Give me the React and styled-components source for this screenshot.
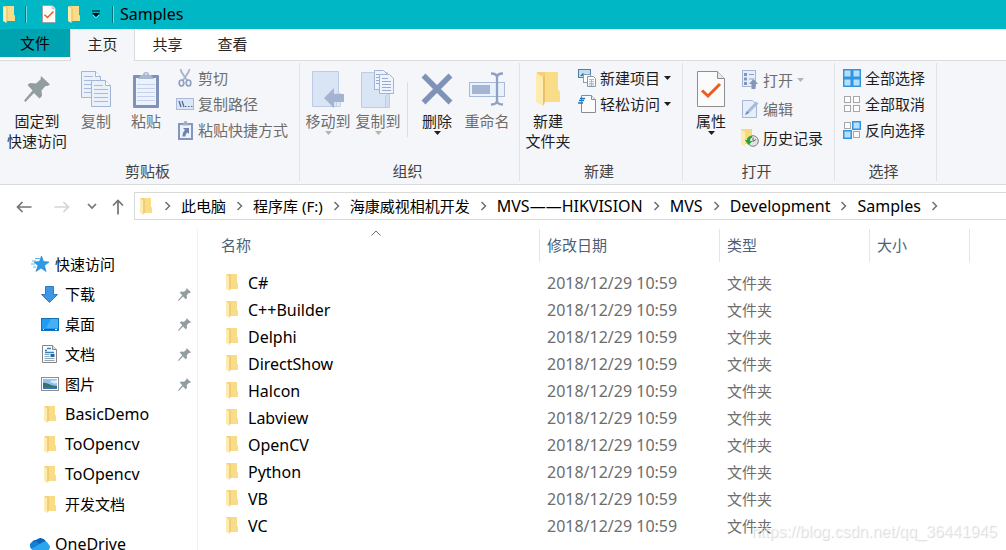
import styled, { createGlobalStyle, css } from "styled-components"

const GlobalStyle = createGlobalStyle`
  * {
    box-sizing: border-box;
  }
  body {
    margin: 0;
    background: #fff;
    color: #000;
    font-family: "Noto Sans", "Noto Sans CJK SC", sans-serif;
    font-size: 15px;
    line-height: 20px;
  }
  button {
    border: 0;
    padding: 0;
    background: none;
    color: inherit;
    font: inherit;
  }
  a {
    color: inherit;
    text-decoration: none;
  }
  svg {
    display: block;
    flex: none;
  }
`

const Window = styled.div`
  display: flex;
  flex-direction: column;
  height: 100vh;
  overflow: hidden;
  position: relative;
`

const TitleBar = styled.header`
  display: flex;
  align-items: center;
  gap: 10px;
  height: 29px;
  padding: 0 0 1px 3px;
  background: #00b7c6;
`

const TitleDivider = styled.span`
  width: 2px;
  height: 17px;
  border-left: 1px solid #027680;
  border-right: 1px solid #6fd9e2;
`

const QuickButton = styled.button`
  display: flex;
  align-items: center;
  justify-content: center;
`

const QuickTools = styled.div`
  display: flex;
  align-items: center;
  gap: 12px;
  padding: 0 2px 0 5px;
`

const Titulo = styled.h1`
  margin: 0 0 0 -4px;
  font-size: 16px;
  font-weight: 400;
`

const TabBar = styled.nav`
  display: flex;
  height: 32px;
  box-shadow: inset 0 -1px #dadbdc;
`

const Tab = styled.button`
  width: 65px;
  padding-bottom: 2px;
  color: #262626;
  ${({ $file }) => $file && css`
    width: 70px;
    height: 28px;
    padding: 0;
    background: #00a4b0;
    color: #000;
  `}
  ${({ $active }) => $active && css`
    border: 1px solid #dadbdc;
    border-top: 0;
    border-bottom: 0;
    background: #f5f6f9;
  `}
`

const Ribbon = styled.div`
  display: flex;
  flex: none;
  padding: 2px 0 3px;
  border-bottom: 1px solid #dadbdc;
  background: #f5f6f9;
`

const Group = styled.section`
  display: flex;
  flex-direction: column;
  flex: none;
  padding: 0 7px 0 3px;
  border-right: 1px solid #e1e2e4;
`

const GroupBody = styled.div`
  display: flex;
  height: 98px;
`

const GroupLabel = styled.h2`
  margin: 0;
  color: #444;
  font-size: 15px;
  font-weight: 400;
  text-align: center;
`

const LargeButton = styled.button`
  display: flex;
  flex-direction: column;
  align-items: center;
  width: ${({ $wide }) => ($wide ? "68px" : "50px")};
  padding-top: 4px;
  color: #1e1e1e;
  white-space: nowrap;
  &:disabled {
    color: #6d6d6d;
  }
`

const LargeIcon = styled.span`
  display: flex;
  align-items: center;
  justify-content: center;
  height: 44px;
`

const GroupDivider = styled.span`
  width: 1px;
  margin: 19px 4px 24px;
  background: #dcdde0;
`

const SmallColumn = styled.div`
  display: grid;
  grid-auto-rows: ${({ $loose }) => ($loose ? "29px" : "26px")};
  align-content: start;
  margin-left: 5px;
  padding: 2px 4px 0 0;
`

const SmallButton = styled.button`
  display: flex;
  align-items: center;
  gap: 4px;
  color: #1e1e1e;
  white-space: nowrap;
  &:disabled {
    color: #6d6d6d;
  }
`

const SmallIcon = styled.span`
  display: flex;
  align-items: center;
  justify-content: center;
  width: 18px;
`

const NavRow = styled.div`
  display: flex;
  align-items: flex-start;
  flex: none;
  padding: 7px 0 8px 16px;
`

const NavButtons = styled.div`
  display: flex;
  align-items: center;
  height: 29px;
`

const NavButton = styled.button`
  margin-right: ${({ $gap }) => $gap}px;
`

const AddressBar = styled.nav`
  display: flex;
  align-items: center;
  flex: 1;
  gap: 10px;
  height: 28px;
  padding-left: 5px;
  border: 1px solid #d9d9d9;
  border-right: 0;
  white-space: nowrap;
`

const AddressIcon = styled.span`
  padding-right: 2px;
`

const Crumb = styled.a`
  font-size: ${({ $latin }) => ($latin ? "16px" : "15px")};
`

const Content = styled.div`
  display: flex;
  flex: 1;
  min-height: 0;
`

const Sidebar = styled.aside`
  flex: none;
  width: 198px;
  padding-top: 20px;
  border-right: 1px solid #f2f2f2;
`

const SideItem = styled.a`
  display: flex;
  align-items: center;
  gap: 6px;
  height: 30px;
  margin-top: ${({ $spaced }) => ($spaced ? "10px" : "0")};
  padding: 0 6px 0 ${({ $root }) => ($root ? "30px" : "40px")};
  font-size: ${({ $latin }) => ($latin ? "16px" : "15px")};
`

const SideIcon = styled.span`
  display: flex;
  justify-content: center;
  width: 19px;
`

const SideLabel = styled.span`
  flex: 1;
`

const FilePane = styled.main`
  flex: 1;
  padding-left: 14px;
  overflow: hidden;
`

const FileTable = styled.table`
  border-collapse: collapse;
  table-layout: fixed;
  width: 758px;
`

const HeadCell = styled.th`
  width: ${({ $width }) => $width}px;
  height: 40px;
  padding: 0;
  color: #4c607a;
  font-weight: 400;
  text-align: left;
  vertical-align: top;
`

const HeadLabel = styled.div`
  position: relative;
  height: 33px;
  padding: 6px 0 0 ${({ $first }) => ($first ? "9px" : "7px")};
  border-right: 1px solid #e5e5e5;
`

const SortMark = styled.span`
  position: absolute;
  top: 1px;
  left: 50%;
  margin-left: -5px;
`

const Cell = styled.td`
  height: 27px;
  padding: 0 0 0 7px;
  color: #6d6d6d;
  font-size: ${({ $latin }) => ($latin ? "16px" : "15px")};
`

const FileName = styled.a`
  display: flex;
  align-items: center;
  gap: 10px;
  padding-left: 7px;
  color: #000;
`

const Watermark = styled.span`
  position: absolute;
  right: 9px;
  bottom: 8px;
  color: rgba(255, 255, 255, 0.6);
  font-family: "Liberation Sans", sans-serif;
  font-size: 16px;
  text-shadow: 1px 1px 1px rgba(0, 0, 0, 0.16);
`

const Folder = ({ large }) => (
  <svg width={large ? 24 : 12} height={large ? 34 : 17} viewBox="0 0 24 34">
    <path d="M1 0h21v18l2 2v10H5z" fill="#f4d077" />
    <path d="M9 0h13v18l2 2v10H9z" fill="#f9dc88" />
    <path d="M0 1l7 4v29l-7-4z" fill="#fdebb0" />
    <path d="M7 5v29l2-4V4z" fill="#e9c168" />
  </svg>
)

const Pin = ({ size }) => (
  <svg width={size} height={size} viewBox="0 0 26 26">
    <path
      d="M17 0l9 8.500-2.500 1.500h-2l-4 4.500.5 5.500-2.500 2.500-5.500-5.500L1.500 26 0 24.500l8.500-10L3.500 9 6 7l6 .5 4.500-4z"
      fill="#929da2"
    />
  </svg>
)

const Caret = ({ muted }) => (
  <svg width="7" height="4" viewBox="0 0 7 4">
    <path d="M0 0h7L3.500 4z" fill={muted ? "#b4b4b4" : "#1e1e1e"} />
  </svg>
)

const Chevron = () => (
  <svg width="7" height="10" viewBox="0 0 7 10">
    <path d="M1.500 1l4 4-4 4" fill="none" stroke="#6f6f6f" strokeWidth="1.500" />
  </svg>
)

const CheckedPage = ({ large }) => (
  <svg width={large ? 28 : 14} height={large ? 36 : 18} viewBox="0 0 28 36">
    <path d="M.5.500h20l7 7v28H.5z" fill="#fbfbfc" stroke="#8e8e90" strokeWidth={large ? 1 : 2} />
    <path d="M20.500.500v7h7" fill="#e8e8ea" stroke="#8e8e90" />
    <path d="M5 19.500l6 5.500L23 13" fill="none" stroke="#f05a1a" strokeWidth="3" />
  </svg>
)

const PageShape = ({ x, y }) => (
  <g transform={`translate(${x} ${y})`}>
    <path d="M.5.500h14l5 5v21H.5z" fill="#eaf1fb" stroke="#a3b4d4" />
    <path d="M14.500.500v5h5" fill="#fff" stroke="#a3b4d4" />
    <path d="M3 5.500h9M3 9.500h14M3 13.500h14M3 17.500h14M3 21.500h14" stroke="#a8b9da" />
  </g>
)

const CopyIcon = () => (
  <svg width="30" height="36" viewBox="0 0 30 36">
    <PageShape x={0} y={0} />
    <PageShape x={10} y={9} />
  </svg>
)

const PasteIcon = () => (
  <svg width="26" height="37" viewBox="0 0 26 37">
    <rect y="4" width="26" height="33" rx="1" fill="#8092b8" />
    <rect x="3" y="7" width="20" height="27" fill="#edf3fc" />
    <path d="M4 13.500h18M4 17.500h18M4 21.500h18M4 25.500h18M4 29.500h18" stroke="#c3d2ea" />
    <path d="M5 8l3-4h2a3 3 0 0 1 6 0h2l3 4z" fill="#a9b7d0" />
    <circle cx="13" cy="3" r="1" fill="#e5ebf5" />
  </svg>
)

const CutIcon = () => (
  <svg width="14" height="18" viewBox="0 0 14 18" fill="none" stroke="#8fa0c0">
    <path d="M2.500 0l1 3 6 9M11.500 0l-1 3-6 9" strokeWidth="1.800" stroke="#a6b4cd" />
    <ellipse cx="3.500" cy="14" rx="2.300" ry="3" strokeWidth="1.700" />
    <ellipse cx="10.500" cy="14" rx="2.300" ry="3" strokeWidth="1.700" />
  </svg>
)

const PathIcon = () => (
  <svg width="18" height="12" viewBox="0 0 18 12">
    <rect x=".5" y=".5" width="17" height="11" fill="#dbe6f6" stroke="#a9badb" />
    <path d="M3 3l2 6M6 3l2 6" stroke="#52688f" strokeWidth="1.300" />
    <path d="M9 8.500h1.500M12 8.500h1.500M15 8.500h1.500" stroke="#52688f" />
  </svg>
)

const PasteLinkIcon = () => (
  <svg width="15" height="19" viewBox="0 0 15 19">
    <rect x="1" y="3" width="13" height="15" fill="#edf3fc" stroke="#8496bc" strokeWidth="2" />
    <path d="M4 4.500L5.500 2a2 2 0 0 1 4 0L11 4.500z" fill="#a0afcb" />
    <path d="M5 7h6v6L9.500 11.500C8 12.500 7.500 13.500 7.500 15.500H4.500c0-2.500.5-4.500 2.500-6.500z" fill="#6f83ad" />
  </svg>
)

const MoveIcon = () => (
  <svg width="32" height="37" viewBox="0 0 32 37">
    <path d="M.5.500h26v35H.5z" fill="#d9e5f5" stroke="#bccce5" />
    <path d="M24.500 22.500h4v13h-4z" fill="#dfe9f7" stroke="#c5d3e9" />
    <path d="M12 27l10-10v6h10v8H22v6z" fill="#a4b3d0" />
  </svg>
)

const CopyToIcon = () => (
  <svg width="34" height="38" viewBox="0 0 34 38">
    <path d="M.5 2.500h26v35H.5z" fill="#d9e5f5" stroke="#bccce5" />
    <path d="M24.500 37.500v-11l2-2h2v13z" fill="#d0deef" stroke="#bccce5" />
    <g fill="#eef4fd" stroke="#a3b4d4">
      <path d="M13.500.500h9l4 4v15h-13z" />
      <path d="M18.500 4.500h10l4 4v15h-14z" />
    </g>
    <path d="M15 4.500h3M15 7.500h3M15 10.500h3M15 13.500h3M21 8.500h6M21 11.500h9M21 14.500h9M21 17.500h9M21 20.500h9" stroke="#98abcf" />
  </svg>
)

const DeleteIcon = () => (
  <svg width="32" height="32" viewBox="0 0 32 32">
    <path d="M2.500 2.500l27 27M29.500 2.500l-27 27" stroke="#7f92b7" strokeWidth="5.500" />
  </svg>
)

const RenameIcon = () => (
  <svg width="36" height="34" viewBox="0 0 36 34">
    <rect x=".5" y="10.500" width="35" height="14" fill="#e9f1fc" stroke="#a9bad8" />
    <rect x="3" y="13" width="18" height="9" fill="#a5b4d1" />
    <path d="M22 1.500c4 0 6 1 6 4v23c0 3-2 4-6 4M34 1.500c-4 0-6 1-6 4v23c0 3 2 4 6 4" fill="none" stroke="#8fa1c3" strokeWidth="2.300" />
  </svg>
)

const NewItemIcon = () => (
  <svg width="18" height="18" viewBox="0 0 18 18">
    <rect x=".5" y=".5" width="12" height="8" fill="#bfe0f3" stroke="#4e7f9f" />
    <path d="M2 7l3-3 3 3z" fill="#357d8f" />
    <rect x="5.500" y="5.500" width="7" height="8" fill="#fff" stroke="#899fb1" />
    <path d="M9.500 7.500h6l2 2v8h-8z" fill="#fff" stroke="#8796a8" />
    <path d="M11 10.500h5M11 12.500h5M11 14.500h5M11 16h5" stroke="#9bbfe4" />
    <path d="M13.500 10v7" stroke="#d9a6a6" />
  </svg>
)

const EasyAccessIcon = () => (
  <svg width="18" height="18" viewBox="0 0 18 18">
    <path d="M3.500.500h10l4 4v13h-14z" fill="#fbfbfc" stroke="#8a8c90" />
    <path d="M13.500.500v4h4" fill="#eee" stroke="#8a8c90" />
    <path d="M2 3.500h5M1 5.500h5M0 8h5" stroke="#2079c4" strokeWidth="1.400" />
  </svg>
)

const OpenIcon = () => (
  <svg width="16" height="19" viewBox="0 0 16 19">
    <rect x=".5" y=".5" width="13" height="16" fill="#e6eefa" stroke="#a5b6d5" />
    <path d="M2 3h3v3H2zM2 7.500h3v3H2zM2 12h3v3H2z" fill="#8296bd" />
    <path d="M7 4.500h5M7 9h5" stroke="#8ea1c5" />
    <path d="M11.500 9l4.500 5h-2.500v5h-4v-5H7z" fill="#8295bb" />
  </svg>
)

const EditIcon = () => (
  <svg width="17" height="18" viewBox="0 0 17 18">
    <path d="M.5.500h10l4 4v13H.5z" fill="#e6eefa" stroke="#a5b6d5" />
    <path d="M3 15l2-4L14 1.500l2.500 2L7 13z" fill="#a9bad8" />
    <path d="M3 15l2-4 2 2z" fill="#7287b1" />
  </svg>
)

const HistoryIcon = () => (
  <svg width="18" height="18" viewBox="0 0 18 18">
    <path d="M0 0h11v15H0z" fill="#f8d983" />
    <path d="M0 1l4 2v15l-4-3z" fill="#fdebb0" />
    <circle cx="12" cy="12" r="5.300" fill="#e3e3e3" stroke="#7c7f80" />
    <path d="M12 8.500v4l3-2" fill="none" stroke="#65696b" />
    <path d="M11 7C7 7 6 9.500 6 11H4l3.500 5 4-4H9c0-2 .5-3 2-3.500z" fill="#23a43a" />
  </svg>
)

// each string has one flag per quadrant: 1 is a selected tile
const TilesIcon = ({ tiles }) => (
  <svg width="18" height="18" viewBox="0 0 18 18">
    {[...tiles].map((on, i) => {
      const x = (i % 2) * 9
      const y = i > 1 ? 9 : 0
      return on === "1" ? (
        <rect key={i} x={x + 0.75} y={y + 0.75} width="7.500" height="7.500" fill="#b5dffb" stroke="#3295e0" strokeWidth="1.500" />
      ) : (
        <rect key={i} x={x + 1.5} y={y + 1.5} width="6" height="6" fill="#fbfbfb" stroke="#a7a7a7" />
      )
    })}
  </svg>
)

const Star = () => (
  <svg width="18" height="16" viewBox="0 0 18 16">
    <path d="M10.500 0l2 5.500 5.500.500-4.500 3.500 1.500 6-5-3.500-5 3.500 2-6L3 6l5.500-.5z" fill="#2b9be8" stroke="#1b7cc6" strokeWidth=".6" />
    <path d="M4 2.500h5M1 5h4M0 8h4M2 11h3" stroke="#64b5ec" />
  </svg>
)

const DownloadArrow = () => (
  <svg width="17" height="17" viewBox="0 0 17 17">
    <path d="M4.500.500h8v8h4l-8 8-8-8h4z" fill="#3d97e4" stroke="#2a7cc7" />
  </svg>
)

const Desktop = () => (
  <svg width="18" height="13" viewBox="0 0 18 13">
    <rect x=".5" y=".5" width="17" height="12" fill="#1f9cf4" stroke="#1670b4" />
    <path d="M10 1h7v9H5z" fill="#45b0f8" />
    <path d="M1 11.500h16" stroke="#145b93" />
    <path d="M2 11.500h1M14 11.500h2" stroke="#fff" />
  </svg>
)

const Documents = () => (
  <svg width="15" height="18" viewBox="0 0 15 18">
    <path d="M.5.500h10l4 4v13H.5z" fill="#fdfdfd" stroke="#858585" />
    <path d="M10.500.500v4h4" fill="#e5e5e5" stroke="#858585" />
    <path d="M3 5.500h2M5 3.500h4M3 7.500h9" stroke="#2d84c4" strokeWidth="1.300" />
    <path d="M2.500 9.500h5M2.500 11.500h5M2.500 13.500h10M2.500 15.500h10" stroke="#8fa4b4" />
    <path d="M8.500 9h4v3h-4z" fill="#28679d" />
  </svg>
)

const Pictures = () => (
  <svg width="18" height="14" viewBox="0 0 18 14">
    <rect x=".5" y=".5" width="17" height="13" fill="#fff" stroke="#8c8c8c" />
    <rect x="2" y="2" width="14" height="10" fill="#8fc3ee" />
    <path d="M2 6c4-1 7 3 14 3v3H2z" fill="#3c6f71" />
    <path d="M2 10h14v2H2z" fill="#2e78b8" />
    <path d="M9 4c2-1 4 0 7-1v3c-3 1-5 0-7-2z" fill="#dceefb" />
  </svg>
)

const Cloud = () => (
  <svg width="20" height="14" viewBox="0 0 20 14">
    <path d="M6 3a6 6 0 0 1 10 2l-6 5-8-5a4 4 0 0 1 4-2z" fill="#0a63b8" />
    <path d="M4 13A4.300 4.300 0 0 1 2 5c3-1.500 5-.5 6 .5l6 5z" fill="#1180d6" />
    <path d="M13 5c3-1 5 0 5 2 3 1 2.500 6-1 6.500H5c-2 0-3-1-3-2z" fill="#2aa5ee" />
  </svg>
)

const Arrow = ({ muted }) => (
  <svg width="16" height="12" viewBox="0 0 16 12">
    <path d="M15.500 6H1.500M6.500 1l-5 5 5 5" fill="none" stroke={muted ? "#d5d5d5" : "#737373"} strokeWidth="1.700" transform={muted ? "rotate(180 8 6)" : undefined} />
  </svg>
)

const crumbs = ["此电脑", "程序库 (F:)", "海康威视相机开发", "MVS——HIKVISION", "MVS", "Development", "Samples"]

const sideItems = [
  { label: "快速访问", icon: <Star />, root: true },
  { label: "下载", icon: <DownloadArrow />, pinned: true },
  { label: "桌面", icon: <Desktop />, pinned: true },
  { label: "文档", icon: <Documents />, pinned: true },
  { label: "图片", icon: <Pictures />, pinned: true },
  { label: "BasicDemo", icon: <Folder /> },
  { label: "ToOpencv", icon: <Folder /> },
  { label: "ToOpencv", icon: <Folder /> },
  { label: "开发文档", icon: <Folder /> },
  { label: "OneDrive", icon: <Cloud />, root: true, spaced: true },
]

const files = ["C#", "C++Builder", "Delphi", "DirectShow", "Halcon", "Labview", "OpenCV", "Python", "VB", "VC"]

const isLatin = (text) => /^[A-Z]/.test(text)

function Large({ icon, lines, caret, wide, disabled }) {
  return (
    <LargeButton $wide={wide} disabled={disabled}>
      <LargeIcon>{icon}</LargeIcon>
      {lines.map((line) => (
        <span key={line}>{line}</span>
      ))}
      {caret && <Caret muted={disabled} />}
    </LargeButton>
  )
}

function Small({ icon, label, caret, disabled }) {
  return (
    <SmallButton disabled={disabled}>
      <SmallIcon>{icon}</SmallIcon>
      {label}
      {caret && <Caret muted={disabled} />}
    </SmallButton>
  )
}

function RibbonGroup({ label, children }) {
  return (
    <Group>
      <GroupBody>{children}</GroupBody>
      <GroupLabel>{label}</GroupLabel>
    </Group>
  )
}

function App() {
  return (
    <Window>
      <GlobalStyle />
      <TitleBar>
        <Folder />
        <TitleDivider />
        <QuickTools>
          <QuickButton aria-label="属性"><CheckedPage /></QuickButton>
          <QuickButton aria-label="新建文件夹"><Folder /></QuickButton>
          <QuickButton aria-label="自定义快速访问工具栏">
            <svg width="8" height="8" viewBox="0 0 8 8">
              <path d="M0 1h8" stroke="#000" />
              <path d="M0 3h8L4 7z" fill="#000" />
              <path d="M1 5l3 3 3-3" fill="none" stroke="#bff" strokeWidth=".6" />
            </svg>
          </QuickButton>
        </QuickTools>
        <TitleDivider />
        <Titulo>Samples</Titulo>
      </TitleBar>

      <TabBar>
        <Tab $file>文件</Tab>
        <Tab $active>主页</Tab>
        <Tab>共享</Tab>
        <Tab>查看</Tab>
      </TabBar>

      <Ribbon>
        <RibbonGroup label="剪贴板">
          <Large wide icon={<Pin size={26} />} lines={["固定到", "快速访问"]} />
          <Large disabled icon={<CopyIcon />} lines={["复制"]} />
          <Large disabled icon={<PasteIcon />} lines={["粘贴"]} />
          <SmallColumn>
            <Small disabled icon={<CutIcon />} label="剪切" />
            <Small disabled icon={<PathIcon />} label="复制路径" />
            <Small disabled icon={<PasteLinkIcon />} label="粘贴快捷方式" />
          </SmallColumn>
        </RibbonGroup>
        <RibbonGroup label="组织">
          <Large disabled caret icon={<MoveIcon />} lines={["移动到"]} />
          <Large disabled caret icon={<CopyToIcon />} lines={["复制到"]} />
          <GroupDivider />
          <Large caret icon={<DeleteIcon />} lines={["删除"]} />
          <Large disabled icon={<RenameIcon />} lines={["重命名"]} />
        </RibbonGroup>
        <RibbonGroup label="新建">
          <Large icon={<Folder large />} lines={["新建", "文件夹"]} />
          <SmallColumn>
            <Small caret icon={<NewItemIcon />} label="新建项目" />
            <Small caret icon={<EasyAccessIcon />} label="轻松访问" />
          </SmallColumn>
        </RibbonGroup>
        <RibbonGroup label="打开">
          <Large caret icon={<CheckedPage large />} lines={["属性"]} />
          <SmallColumn $loose>
            <Small disabled caret icon={<OpenIcon />} label="打开" />
            <Small disabled icon={<EditIcon />} label="编辑" />
            <Small icon={<HistoryIcon />} label="历史记录" />
          </SmallColumn>
        </RibbonGroup>
        <RibbonGroup label="选择">
          <SmallColumn>
            <Small icon={<TilesIcon tiles="1111" />} label="全部选择" />
            <Small icon={<TilesIcon tiles="0000" />} label="全部取消" />
            <Small icon={<TilesIcon tiles="0110" />} label="反向选择" />
          </SmallColumn>
        </RibbonGroup>
      </Ribbon>

      <NavRow>
        <NavButtons>
          <NavButton $gap={22} aria-label="后退"><Arrow /></NavButton>
          <NavButton $gap={17} aria-label="前进" disabled><Arrow muted /></NavButton>
          <NavButton $gap={15} aria-label="最近浏览的位置">
            <svg width="10" height="7" viewBox="0 0 10 7">
              <path d="M1 1l4 4 4-4" fill="none" stroke="#737373" strokeWidth="1.700" />
            </svg>
          </NavButton>
          <NavButton $gap={10} aria-label="上移">
            <svg width="12" height="16" viewBox="0 0 12 16">
              <path d="M6 15.500V1.500M1 6.500l5-5 5 5" fill="none" stroke="#737373" strokeWidth="1.700" />
            </svg>
          </NavButton>
        </NavButtons>
        <AddressBar>
          <AddressIcon><Folder /></AddressIcon>
          <Chevron />
          {crumbs.map((name) => [
            <Crumb key={name} href="#" $latin={isLatin(name)}>{name}</Crumb>,
            <Chevron key={name + "-next"} />,
          ])}
        </AddressBar>
      </NavRow>

      <Content>
        <Sidebar>
          {sideItems.map(({ label, icon, root, pinned, spaced }, i) => (
            <SideItem key={i} href="#" $root={root} $spaced={spaced} $latin={isLatin(label)}>
              <SideIcon>{icon}</SideIcon>
              <SideLabel>{label}</SideLabel>
              {pinned && <Pin size={13} />}
            </SideItem>
          ))}
        </Sidebar>
        <FilePane>
          <FileTable>
            <thead>
              <tr>
                <HeadCell $width={328}>
                  <HeadLabel $first>
                    名称
                    <SortMark>
                      <svg width="10" height="6" viewBox="0 0 10 6">
                        <path d="M.5 5.500L5 1l4.500 4.500" fill="none" stroke="#6d6d6d" />
                      </svg>
                    </SortMark>
                  </HeadLabel>
                </HeadCell>
                <HeadCell $width={180}><HeadLabel>修改日期</HeadLabel></HeadCell>
                <HeadCell $width={150}><HeadLabel>类型</HeadLabel></HeadCell>
                <HeadCell $width={100}><HeadLabel>大小</HeadLabel></HeadCell>
              </tr>
            </thead>
            <tbody>
              {files.map((name) => (
                <tr key={name}>
                  <Cell $latin>
                    <FileName href="#"><Folder />{name}</FileName>
                  </Cell>
                  <Cell $latin>2018/12/29 10:59</Cell>
                  <Cell>文件夹</Cell>
                  <Cell />
                </tr>
              ))}
            </tbody>
          </FileTable>
        </FilePane>
      </Content>
      <Watermark>https://blog.csdn.net/qq_36441945</Watermark>
    </Window>
  )
}

export default App
